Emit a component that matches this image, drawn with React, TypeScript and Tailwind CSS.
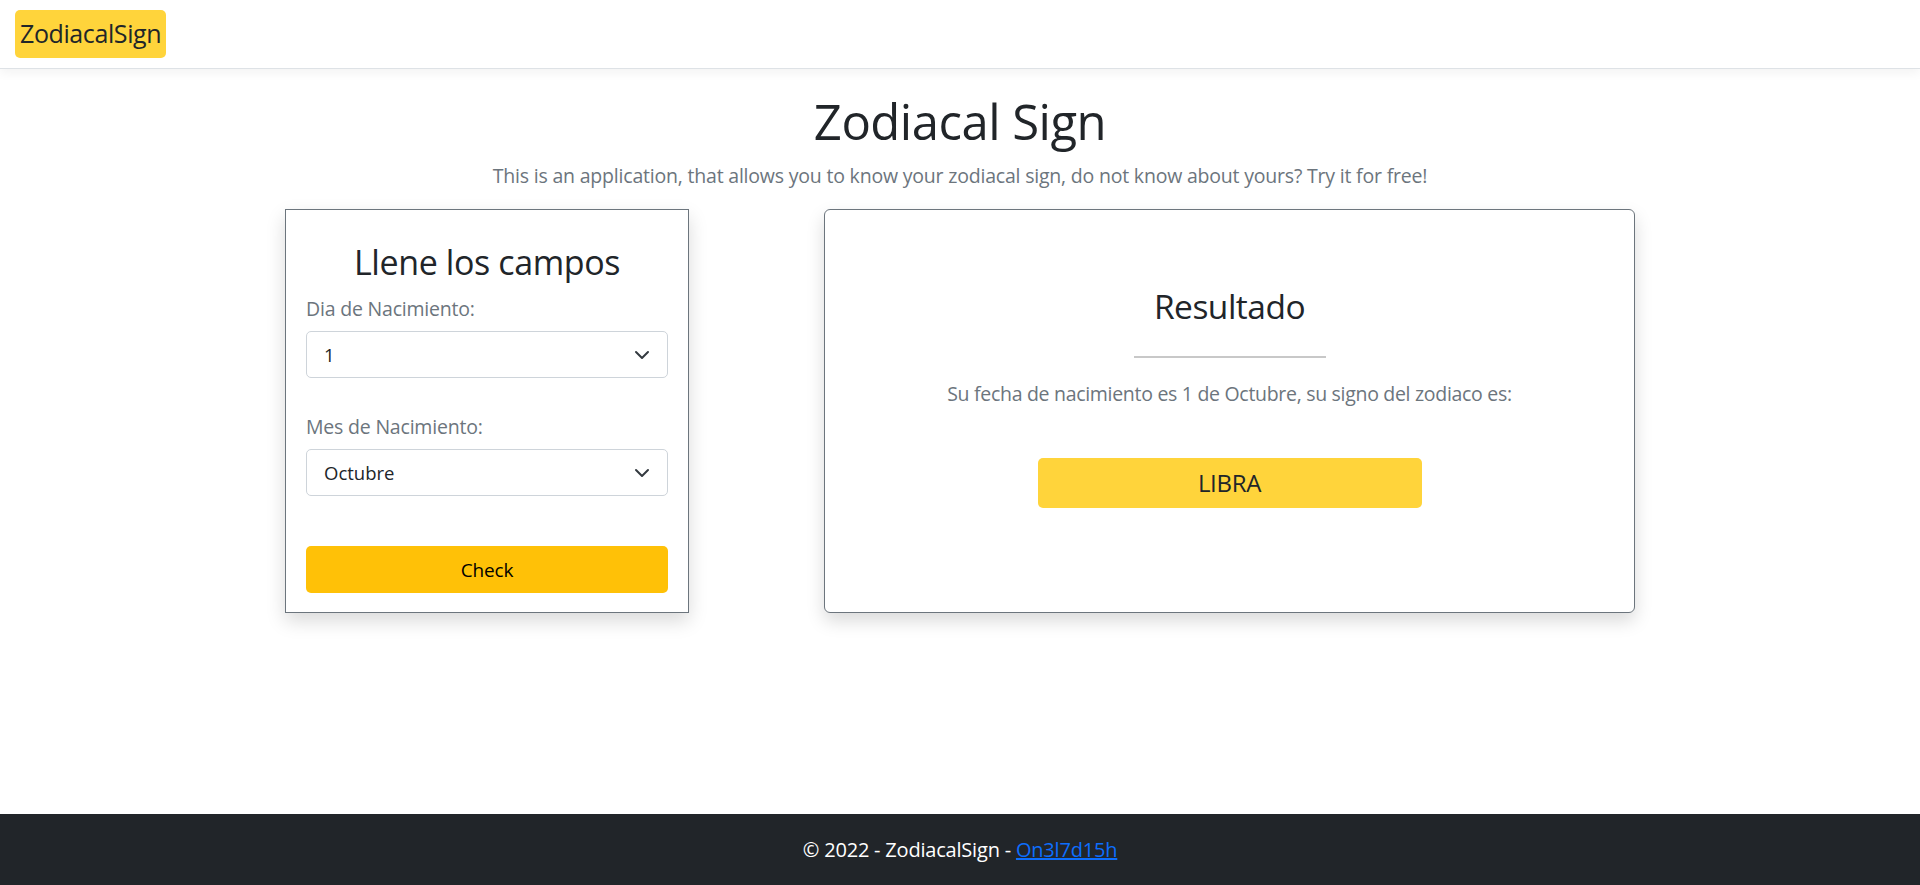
import { useState } from "react";

const days = Array.from({ length: 31 }, (_, i) => String(i + 1));
const months = [
  "Enero",
  "Febrero",
  "Marzo",
  "Abril",
  "Mayo",
  "Junio",
  "Julio",
  "Agosto",
  "Septiembre",
  "Octubre",
  "Noviembre",
  "Diciembre",
];

function Chevron() {
  return (
    <svg
      className="pointer-events-none absolute right-[18px] top-1/2 -translate-y-1/2"
      width="16"
      height="16"
      viewBox="0 0 16 16"
    >
      <path
        d="M2 5l6 6 6-6"
        fill="none"
        stroke="#343a40"
        strokeWidth="2"
        strokeLinecap="round"
        strokeLinejoin="round"
      />
    </svg>
  );
}

function Select({
  value,
  options,
  onChange,
}: {
  value: string;
  options: string[];
  onChange: (v: string) => void;
}) {
  return (
    <div className="relative">
      <select
        value={value}
        onChange={(e) => onChange(e.target.value)}
        className="w-full h-[47px] appearance-none rounded-[5px] border border-[#ced4da] bg-white pl-[17px] pr-10 text-[18.5px] text-[#212529] outline-none"
      >
        {options.map((o) => (
          <option key={o} value={o}>
            {o}
          </option>
        ))}
      </select>
      <Chevron />
    </div>
  );
}

export default function App() {
  const [day, setDay] = useState("1");
  const [month, setMonth] = useState("Octubre");

  return (
    <div className="min-h-[885px] flex flex-col bg-white text-[#212529] font-['Open_Sans',sans-serif]">
      {/* NAVBAR */}
      <nav className="h-[69px] border-b border-[#dee2e6] shadow-[0_4px_10px_rgba(0,0,0,0.05)] flex items-center px-[15px]">
        <span className="bg-[#ffd43b] rounded-[5px] h-[48px] px-[5px] flex items-center text-[25px] tracking-[-0.4px] text-[#212529]">
          ZodiacalSign
        </span>
      </nav>

      {/* MAIN */}
      <main className="flex-1 flex flex-col items-center">
        <h1 className="mt-[20px] text-[49px] leading-[64px] tracking-[-0.5px] font-normal">
          Zodiacal Sign
        </h1>
        <p className="mt-[8px] text-[19.5px] tracking-[-0.2px] text-[#6c757d]">
          This is an application, that allows you to know your zodiacal sign,
          do not know about yours? Try it for free!
        </p>

        <div className="mt-[19px] w-[1350px] flex justify-between">
          {/* FORM CARD */}
          <div className="w-[404px] h-[404px] border border-[#6c757d] bg-white shadow-[0_8px_18px_rgba(0,0,0,0.15)] px-[20px] pt-[30px]">
            <h2 className="text-center text-[34px] leading-[44px] tracking-[-0.4px]">
              Llene los campos
            </h2>
            <label className="block mt-[11px] text-[19.5px] leading-[27px] tracking-[-0.2px] text-[#6c757d]">
              Dia de Nacimiento:
            </label>
            <div className="mt-[9px]">
              <Select value={day} options={days} onChange={setDay} />
            </div>
            <label className="block mt-[35px] text-[19.5px] leading-[27px] tracking-[-0.2px] text-[#6c757d]">
              Mes de Nacimiento:
            </label>
            <div className="mt-[9px]">
              <Select value={month} options={months} onChange={setMonth} />
            </div>
            <button className="mt-[50px] w-full h-[47px] rounded-[5px] bg-[#ffc107] text-[19px] tracking-[-0.2px] text-black">
              Check
            </button>
          </div>

          {/* RESULT CARD */}
          <div className="w-[811px] h-[404px] rounded-[6px] border border-[#6c757d] bg-white shadow-[0_8px_18px_rgba(0,0,0,0.15)] flex flex-col items-center pt-[74px]">
            <h2 className="text-[33.5px] leading-[44px] tracking-[-0.5px]">
              Resultado
            </h2>
            <hr className="mt-[28px] w-[192px] border-t-2 border-[#c8c8c8]" />
            <p className="mt-[21px] text-[19.5px] tracking-[-0.3px] text-[#6c757d]">
              Su fecha de nacimiento es {day} de {month}, su signo del zodiaco
              es:
            </p>
            <div className="mt-[49px] w-[384px] h-[50px] rounded-[5px] bg-[#ffd43b] flex items-center justify-center text-[24px] tracking-[-0.3px]">
              LIBRA
            </div>
          </div>
        </div>
      </main>

      {/* FOOTER */}
      <footer className="h-[71px] bg-[#212529] flex items-center justify-center text-[20px] tracking-[-0.2px] text-white">
        © 2022 - ZodiacalSign -&nbsp;
        <a href="#" className="text-[#0d6efd] underline">
          On3l7d15h
        </a>
      </footer>
    </div>
  );
}
